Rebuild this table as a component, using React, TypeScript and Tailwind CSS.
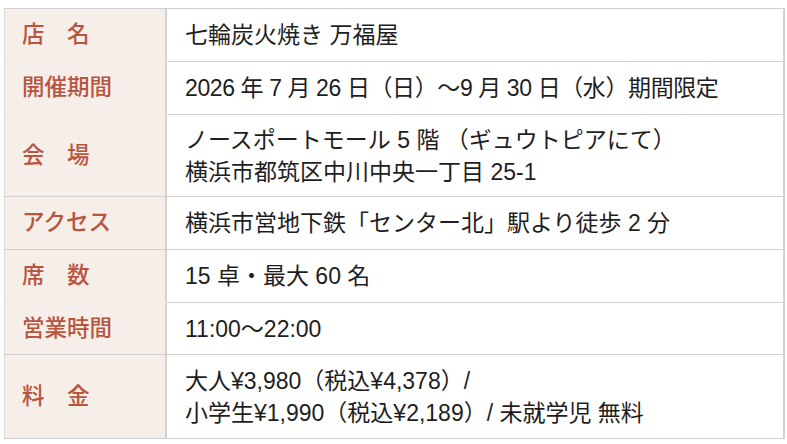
import React from "react";

type Row = {
  label: string;
  lines: string[];
  h: string;
  leftTop: boolean;
  tight?: boolean;
};

const rows: Row[] = [
  { label: "店　名", lines: ["七輪炭火焼き 万福屋"], h: "h-[53px]", leftTop: true },
  {
    label: "開催期間",
    lines: ["2026 年 7 月 26 日（日）～9 月 30 日（水）期間限定"],
    h: "h-[53px]",
    leftTop: false,
    tight: true,
  },
  {
    label: "会　場",
    lines: ["ノースポートモール 5 階 （ギュウトピアにて）", "横浜市都筑区中川中央一丁目 25-1"],
    h: "h-[82px]",
    leftTop: false,
  },
  { label: "アクセス", lines: ["横浜市営地下鉄「センター北」駅より徒歩 2 分"], h: "h-[53px]", leftTop: true },
  { label: "席　数", lines: ["15 卓・最大 60 名"], h: "h-[53px]", leftTop: true },
  { label: "営業時間", lines: ["11:00～22:00"], h: "h-[52px]", leftTop: false },
  {
    label: "料　金",
    lines: ["大人¥3,980（税込¥4,378）/", "小学生¥1,990（税込¥2,189）/ 未就学児 無料"],
    h: "h-[84px]",
    leftTop: true,
  },
];

export default function App() {
  return (
    <div
      className="w-[787px] h-[444px] bg-white pt-[8px] pl-[4px]"
      style={{ fontFamily: '"Liberation Sans", "Noto Sans CJK JP", sans-serif' }}
    >
      <div className="w-[781px] border-b border-[#cfcfcf]">
        {rows.map((r, i) => (
          <div key={i} className={`flex ${r.h}`}>
            <div
              className={`w-[163px] shrink-0 bg-[#f5eee9] border-l border-l-[#dcdcdc] border-r-2 border-r-[#d2d2d2] border-t ${
                r.leftTop ? "border-t-[#cfcfcf]" : "border-t-[#f5eee9]"
              } flex items-center pl-[17px]`}
            >
              <div className="text-[22.5px] leading-[32px] text-[#b8553f] font-medium whitespace-nowrap">
                {r.label}
              </div>
            </div>
            <div className="flex-1 border-t border-t-[#cfcfcf] border-r-2 border-r-[#d2d2d2] flex flex-col justify-center pl-[18px]">
              {r.lines.map((l, j) => (
                <div
                  key={j}
                  className={`text-[23px] leading-[32px] text-[#1e1e1e] whitespace-nowrap ${
                    r.tight ? "tracking-[-0.4px]" : ""
                  }`}
                >
                  {l}
                </div>
              ))}
            </div>
          </div>
        ))}
      </div>
    </div>
  );
}
